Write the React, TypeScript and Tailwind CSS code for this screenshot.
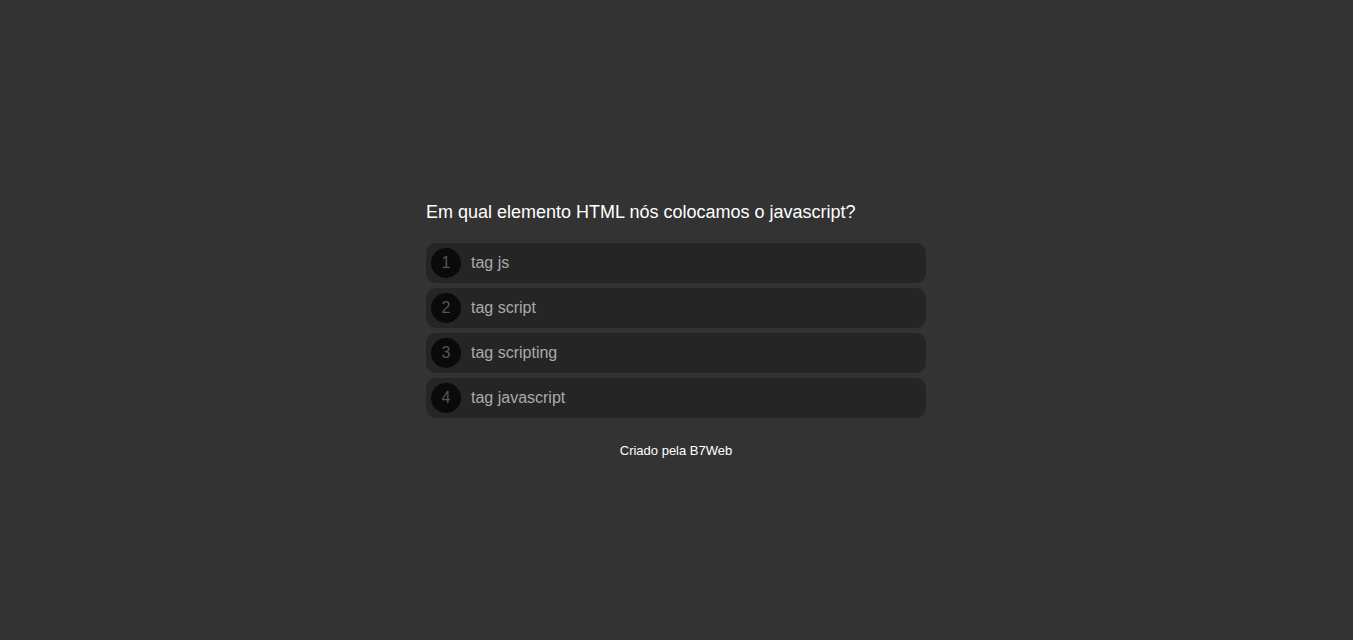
import React from "react";

const options = ["tag js", "tag script", "tag scripting", "tag javascript"];

export default function App() {
  return (
    <div className="flex min-h-screen w-full justify-center bg-[#333333] pr-[1px] pt-[202px]" style={{ fontFamily: '"Liberation Sans", Arial, sans-serif' }}>
      <div className="w-[500px]">
        <div className="text-[18px] leading-[21px] text-white">Em qual elemento HTML nós colocamos o javascript?</div>
        <div className="mt-[20px] flex flex-col gap-[5px]">
          {options.map((o, i) => (
            <div key={i} className="flex h-[40px] items-center gap-[10px] rounded-[10px] bg-[#252525] px-[5px]">
              <div className="flex h-[30px] w-[30px] items-center justify-center rounded-full bg-[#0a0a0a] text-[16px] text-[#555555]">
                {i + 1}
              </div>
              <div className="text-[16px] text-[#aaaaaa]">{o}</div>
            </div>
          ))}
        </div>
        <div className="mt-[25px] text-center text-[13px] leading-[15px] text-white">Criado pela B7Web</div>
      </div>
    </div>
  );
}
